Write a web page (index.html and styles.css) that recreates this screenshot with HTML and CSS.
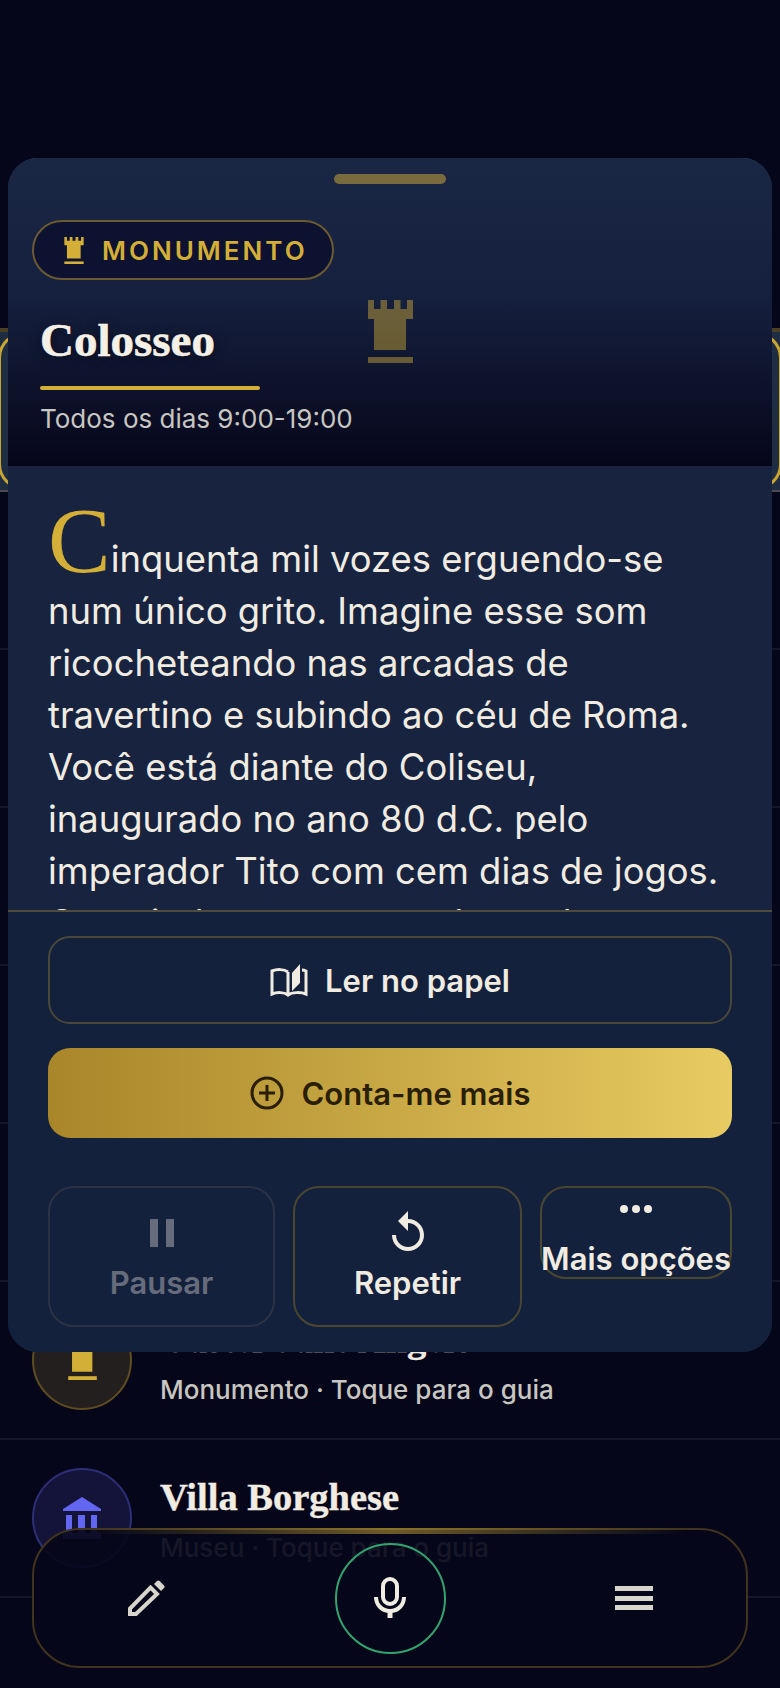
FILE: index.html
```html
<!DOCTYPE html>
<html lang="pt">
<head>
    <meta charset="UTF-8">
    <title>Guia de Roma</title>
    <link rel="stylesheet" href="styles.css">
</head>
<body>
<div class="screen">
    <svg width="0" height="0" class="defs">
        <symbol id="rook" viewBox="0 0 45 63">
            <path d="M0 0h6v9h6.5V0H19v9h7V0h6.5v9H39V0h6v19h-7v31H6V19H0z"/>
            <rect y="57" width="45" height="6"/>
        </symbol>
    </svg>

    <ul class="places">
        <li class="place place-active"><div class="place-inner"></div></li>
        <li class="place"></li>
        <li class="place"></li>
        <li class="place"></li>
        <li class="place"></li>
        <li class="place"></li>
        <li class="place">
            <span class="place-icon icon-gold"><svg class="rook-sm"><use href="#rook"/></svg></span>
            <div class="place-text">
                <div class="place-name">Castel Sant'Angelo</div>
                <div class="place-sub">Monumento · Toque para o guia</div>
            </div>
        </li>
        <li class="place">
            <span class="place-icon icon-blue">
                <svg class="museum" viewBox="0 0 40 42">
                    <path d="M20 0L39 12V14H1V12Z"/>
                    <rect x="4" y="18" width="6" height="18"/>
                    <rect x="16" y="18" width="7" height="18"/>
                    <rect x="29" y="18" width="6" height="18"/>
                    <rect x="1" y="36" width="38" height="6"/>
                </svg>
            </span>
            <div class="place-text">
                <div class="place-name">Villa Borghese</div>
                <div class="place-sub">Museu · Toque para o guia</div>
            </div>
        </li>
    </ul>

    <section class="sheet">
        <header class="sheet-head">
            <div class="handle"></div>
            <div class="badge">
                <svg class="badge-icon"><use href="#rook"/></svg>
                <span>MONUMENTO</span>
            </div>
            <svg class="head-rook"><use href="#rook"/></svg>
            <h1 class="title">Colosseo</h1>
            <div class="title-rule"></div>
            <p class="hours">Todos os dias 9:00-19:00</p>
        </header>

        <div class="story">
            <p>Cinquenta mil vozes erguendo-se num único grito. Imagine esse som ricocheteando nas arcadas de travertino e subindo ao céu de Roma. Você está diante do Coliseu, inaugurado no ano 80 d.C. pelo imperador Tito com cem dias de jogos. O ar ainda parece guardar cada eco.</p>
        </div>

        <footer class="sheet-foot">
            <button class="btn btn-outline">
                <svg class="book" viewBox="0 0 38 34" fill="none" stroke="currentColor" stroke-width="3">
                    <path d="M18 9C14 6 7 6 2 8V31C7 29 14 29 18 32C22 29 31 29 36 31V8C35 7.5 33 7 32 7M18 9V32"/>
                    <path d="M22 10L30 1V20L22 28Z" fill="currentColor" stroke="none"/>
                </svg>
                Ler no papel
            </button>
            <button class="btn btn-gold">
                <svg class="plus" viewBox="0 0 34 34" fill="none" stroke="currentColor" stroke-width="3">
                    <circle cx="17" cy="17" r="15"/>
                    <path d="M17 9V25M9 17H25"/>
                </svg>
                Conta-me mais
            </button>
            <div class="controls">
                <button class="ctrl ctrl-off">
                    <svg class="ctrl-icon" viewBox="0 0 24 24" fill="currentColor"><path d="M6 19h4V5H6v14zm8-14v14h4V5h-4z"/></svg>
                    Pausar
                </button>
                <button class="ctrl">
                    <svg class="ctrl-icon" viewBox="0 0 24 24" fill="currentColor"><path d="M12 5V1L7 6l5 5V7c3.31 0 6 2.69 6 6s-2.69 6-6 6-6-2.69-6-6H4c0 4.42 3.58 8 8 8s8-3.58 8-8-3.58-8-8-8z"/></svg>
                    Repetir
                </button>
                <button class="ctrl ctrl-more">
                    <svg class="dots" viewBox="0 6 24 12" fill="currentColor"><circle cx="6" cy="12" r="2"/><circle cx="12" cy="12" r="2"/><circle cx="18" cy="12" r="2"/></svg>
                    Mais opções
                </button>
            </div>
        </footer>
    </section>

    <nav class="dock">
        <button class="dock-btn">
            <svg class="pencil" viewBox="0 0 37 36">
                <path d="M2 34V28.500L22.500 7.500L29 14L8 34Z" fill="none" stroke="currentColor" stroke-width="4"/>
                <path d="M26 4L29 1a2 2 0 0 1 2.600 0L36 5.400a2 2 0 0 1 0 2.600L33 11Z" fill="currentColor"/>
            </svg>
        </button>
        <button class="dock-btn dock-mic">
            <svg class="mic" viewBox="0 0 32 42" fill="none" stroke="currentColor">
                <rect x="9" y="2" width="14" height="25" rx="7" stroke-width="4"/>
                <path d="M2 20c0 8 6 14 14 14s14-6 14-14" stroke-width="4"/>
                <path d="M16 33V41" stroke-width="5"/>
            </svg>
        </button>
        <button class="dock-btn">
            <svg class="burger" viewBox="0 0 38 24" fill="currentColor">
                <rect width="38" height="5"/>
                <rect y="10" width="38" height="5"/>
                <rect y="19" width="38" height="5"/>
            </svg>
        </button>
    </nav>
</div>
</body>
</html>
```

FILE: styles.css
```css
body {
  margin: 0;
  background-color: #06061a;
  font-family: "Inter", "Liberation Sans", sans-serif;
  color: #f0ece2;
}

button {
  font-family: inherit;
  cursor: pointer;
}

.defs {
  position: absolute;
}

.screen {
  position: relative;
  width: 780px;
  height: 1688px;
  overflow: hidden;
  background-color: #06061a;
}

/* list behind the sheet */
.places {
  list-style: none;
  margin: 0;
  padding: 332px 0 0;
}

.place {
  box-sizing: border-box;
  height: 158px;
  padding: 0 32px;
  display: flex;
  align-items: center;
  gap: 28px;
  border-bottom: 2px solid #16162a;
}

.place-active {
  padding: 0;
  margin-top: -4px;
  height: 164px;
  background-color: #1f2d42;
  border-top: 4px solid #4a3f22;
  border-bottom: 2px solid #4a4a50;
}

.place-inner {
  box-sizing: border-box;
  flex: 1;
  height: 100%;
  margin: 0 -2px;
  border: 3px solid #c9a535;
  border-radius: 26px;
}

.place-icon {
  box-sizing: border-box;
  flex-shrink: 0;
  width: 100px;
  height: 100px;
  border-radius: 50%;
  display: flex;
  align-items: center;
  justify-content: center;
}

.icon-gold {
  background-color: #241f1f;
  border: 2px solid #5f4d20;
  fill: #d4af37;
}

.icon-blue {
  background-color: #14143a;
  border: 2px solid #2e2e78;
  fill: #6366f1;
}

.rook-sm {
  width: 29px;
  height: 40px;
}

.museum {
  width: 40px;
  height: 42px;
}

.place-text {
  padding-top: 3px;
}

.place-name {
  font-family: "Liberation Serif", serif;
  font-weight: 700;
  font-size: 38.5px;
  line-height: 44px;
  color: #f0ece2;
  -webkit-text-stroke: 0.4px #f0ece2;
}

.place-sub {
  margin-top: 13px;
  font-size: 26px;
  font-weight: 500;
  line-height: 32px;
  color: #c8c6c0;
}

/* bottom sheet */
.sheet {
  position: absolute;
  left: 8px;
  top: 158px;
  width: 764px;
  height: 1194px;
  border-radius: 30px;
  overflow: hidden;
  display: flex;
  flex-direction: column;
  background-color: #18233f;
}

.sheet::before {
  content: "";
  position: absolute;
  left: 0;
  right: 0;
  top: 0;
  height: 4px;
  background: linear-gradient(90deg, #3d4860, #8a7a3c 50%, #3d4860);
}

.sheet-head {
  position: relative;
  box-sizing: border-box;
  height: 308px;
  padding: 16px 24px 0;
  background: linear-gradient(180deg, #1a2744 0%, #15203e 45%, #06061a 100%);
}

.handle {
  width: 112px;
  height: 10px;
  margin: 0 auto;
  border-radius: 5px;
  background-color: #7a6b3e;
}

.badge {
  box-sizing: border-box;
  width: 302px;
  height: 60px;
  margin-top: 36px;
  padding-left: 30px;
  display: flex;
  align-items: center;
  gap: 18px;
  border: 2px solid #6b5a30;
  border-radius: 30px;
  background-color: #0d1230;
  color: #d4af37;
  font-size: 26px;
  font-weight: 600;
  letter-spacing: 3px;
}

.badge-icon {
  width: 20px;
  height: 27px;
  fill: #d4af37;
}

.head-rook {
  position: absolute;
  left: 360px;
  top: 142px;
  width: 45px;
  height: 63px;
  fill: #d4af37;
  opacity: 0.45;
}

.title {
  margin: 32px 0 0 8px;
  font-family: "Liberation Serif", serif;
  font-weight: 700;
  font-size: 47px;
  line-height: 56px;
  color: #f5f0e6;
  -webkit-text-stroke: 0.6px #f5f0e6;
  text-shadow: 0 2px 12px rgba(0, 0, 0, 0.5);
}

.title-rule {
  width: 220px;
  height: 4px;
  margin: 18px 0 0 8px;
  border-radius: 2px;
  background-color: #d4af37;
}

.hours {
  margin: 13px 0 0 8px;
  font-size: 26px;
  line-height: 32px;
  color: #c8c6c0;
}

.story {
  flex: 1;
  overflow: hidden;
  padding: 32px 40px 0;
}

.story p {
  margin: 0;
  font-size: 36.4px;
  line-height: 52px;
}

.story p::first-letter {
  font-family: "Liberation Serif", serif;
  font-size: 94px;
  line-height: 0.9;
  color: #d4af37;
  -webkit-text-stroke: 1px #d4af37;
}

.sheet-foot {
  padding: 24px 40px 25px;
  display: flex;
  flex-direction: column;
  background-color: #14213d;
  border-top: 2px solid #4f4c3e;
}

.btn {
  display: flex;
  align-items: center;
  justify-content: center;
  gap: 17px;
  font-size: 31px;
  font-weight: 600;
  border-radius: 22px;
}

.btn-outline {
  height: 88px;
  background: none;
  border: 2px solid #4a4838;
  color: #f0ece2;
}

.btn-gold {
  height: 90px;
  margin-top: 24px;
  border: none;
  background: linear-gradient(90deg, #a98629, #e8cb62);
  color: #2a1f05;
  gap: 18px;
}

.book {
  width: 38px;
  height: 34px;
}

.plus {
  width: 34px;
  height: 34px;
}

.controls {
  margin-top: 48px;
  display: flex;
  justify-content: space-between;
  align-items: flex-start;
}

.ctrl {
  box-sizing: border-box;
  width: 229px;
  height: 141px;
  padding: 0 0 4px;
  display: flex;
  flex-direction: column;
  align-items: center;
  justify-content: center;
  gap: 8px;
  background: none;
  border: 2px solid #4a4630;
  border-radius: 26px;
  color: #f0ece2;
  font-size: 31px;
  font-weight: 600;
  line-height: 36px;
}

.ctrl-off {
  width: 227px;
  border-color: #2b3244;
  color: #666c7c;
}

.ctrl-more {
  width: 192px;
  height: 93px;
  justify-content: flex-start;
  padding: 9px 0 0;
  gap: 20px;
  white-space: nowrap;
}

.ctrl-icon {
  width: 48px;
  height: 48px;
}

.dots {
  width: 48px;
  height: 24px;
}

/* floating dock */
.dock {
  position: absolute;
  left: 32px;
  top: 1528px;
  box-sizing: border-box;
  width: 716px;
  height: 140px;
  padding: 0 57px;
  display: flex;
  align-items: center;
  justify-content: space-between;
  background-color: rgba(6, 6, 26, 0.92);
  border: 2px solid #40341c;
  border-radius: 48px;
}

.dock::before {
  content: "";
  position: absolute;
  left: 60px;
  right: 60px;
  top: -2px;
  height: 6px;
  background: linear-gradient(90deg, rgba(212, 175, 55, 0), rgba(212, 175, 55, 0.5) 50%, rgba(212, 175, 55, 0));
}

.dock-btn {
  box-sizing: border-box;
  width: 111px;
  height: 111px;
  padding: 0;
  display: flex;
  align-items: center;
  justify-content: center;
  background: none;
  border: none;
  border-radius: 50%;
  color: #d8d5cd;
}

.dock-mic {
  border: 2px solid #33a36e;
  color: #f0ece2;
}

.pencil {
  width: 37px;
  height: 36px;
}

.mic {
  width: 32px;
  height: 42px;
}

.burger {
  width: 38px;
  height: 24px;
}
```
